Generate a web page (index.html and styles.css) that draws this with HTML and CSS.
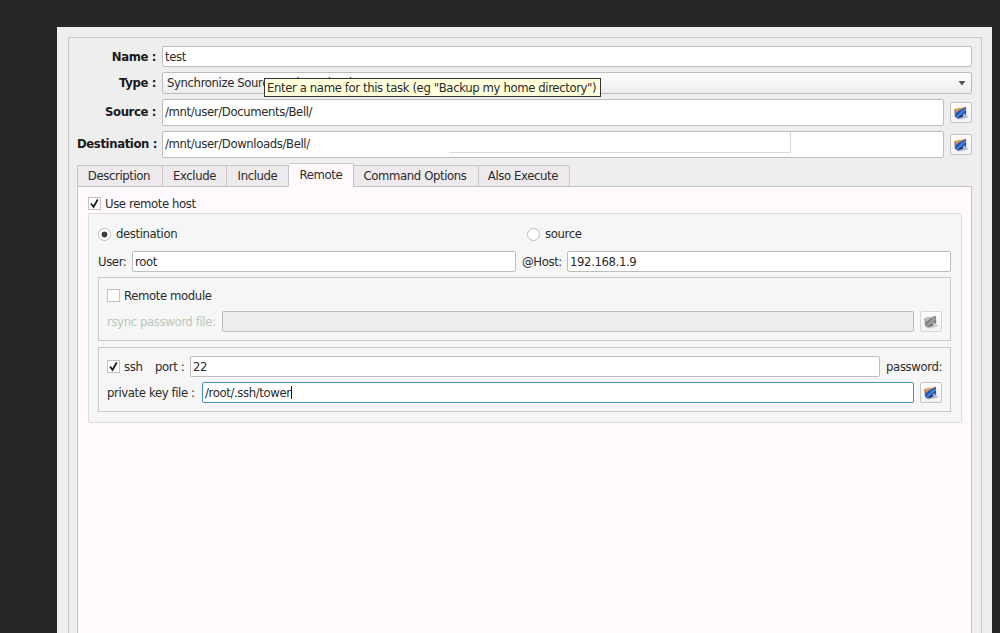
FILE: index.html
```html
<!DOCTYPE html>
<html lang="en">

<head>
  <meta charset="UTF-8">
  <meta name="viewport" content="width=device-width, initial-scale=1.0">
  <title>Task Settings</title>

  <link rel="stylesheet" href="styles.css">
</head>

<body>
  <!-- Folder icon shared by all the browse buttons -->
  <svg class="defs" width="0" height="0">
    <symbol id="folder" viewBox="0 0 16 16">
      <path d="M4 13 L14.5 10.5 L14.8 12.6 L6 14.5 Z" fill="#8a8da0" opacity="0.6" />
      <path d="M1.3 4.5 L5 2.8 L7.5 3 L12.8 1.5 L12 4 L3 9 Z" fill="#e0a050" />
      <path d="M1.3 4.5 L3 4.5 L3.5 12.5 L1.8 11 Z" fill="#a8745c" />
      <path d="M2.2 8.5 L6.5 5 L13 2 L13.2 10 L4.2 13.5 L2 11.5 Z" fill="#2855b8" />
      <path d="M3 11.5 L10.5 4.5 L13 3.2 L12.8 5 L4.8 12.5 Z" fill="#4288d8" />
      <path d="M4.5 13.6 L8 10 L10.5 11.4 Z" fill="#232c70" />
      <path d="M9.5 9.8 L12 8.8 L12.3 10 L10 10.8 Z" fill="#c3cdec" />
    </symbol>
  </svg>

  <div class="window">
    <div class="frame">
      <div class="row row-name">
        <label class="title">Name :</label>
        <div class="field">test</div>
      </div>
      <div class="row row-type">
        <label class="title">Type :</label>
        <div class="field select">
          <span>Synchronize Source and Destination</span>
          <svg class="arrow" width="8" height="5"><path d="M0.5 0 H7.5 L4 4.5 Z" fill="#555" /></svg>
        </div>
        <div class="tooltip">Enter a name for this task (eg "Backup my home directory")</div>
      </div>
      <div class="row row-path">
        <label class="title">Source :</label>
        <div class="field">/mnt/user/Documents/Bell/</div>
        <button class="browse"><svg width="16" height="16"><use href="#folder" /></svg></button>
      </div>
      <div class="row row-path">
        <label class="title">Destination :</label>
        <div class="field">/mnt/user/Downloads/Bell/<span class="outline"></span></div>
        <button class="browse"><svg width="16" height="16"><use href="#folder" /></svg></button>
      </div>

      <div class="tabs">
        <div class="tab tab-description">Description</div>
        <div class="tab tab-exclude">Exclude</div>
        <div class="tab tab-include">Include</div>
        <div class="tab tab-remote active">Remote</div>
        <div class="tab tab-command">Command Options</div>
        <div class="tab tab-execute">Also Execute</div>
      </div>

      <div class="pane">
        <div class="check-row">
          <span class="checkbox"><svg width="11" height="11"><path d="M2 5.5 L4.5 8.8 L8.8 1.5" /></svg></span>
          <span>Use remote host</span>
        </div>

        <div class="group">
          <div class="radios">
            <div class="radio-row"><span class="radio checked"></span>destination</div>
            <div class="radio-row"><span class="radio"></span>source</div>
          </div>
          <div class="host-row">
            <label class="user">User:</label>
            <div class="field">root</div>
            <label class="host">@Host:</label>
            <div class="field">192.168.1.9</div>
          </div>

          <div class="box module">
            <div class="check-row">
              <span class="checkbox"></span>
              <span>Remote module</span>
            </div>
            <div class="file-row">
              <label class="rsync">rsync password file:</label>
              <div class="field disabled"></div>
              <button class="browse off"><svg width="16" height="16"><use href="#folder" /></svg></button>
            </div>
          </div>

          <div class="box ssh">
            <div class="port-row">
              <span class="checkbox"><svg width="11" height="11"><path d="M2 5.5 L4.5 8.8 L8.8 1.5" /></svg></span>
              <span class="ssh-label">ssh</span>
              <label class="port">port :</label>
              <div class="field">22</div>
              <label class="password">password:</label>
            </div>
            <div class="file-row">
              <label class="key">private key file :</label>
              <div class="field focused">/root/.ssh/tower<span class="caret"></span></div>
              <button class="browse"><svg width="16" height="16"><use href="#folder" /></svg></button>
            </div>
          </div>
        </div>
      </div>
    </div>
  </div>
</body>

</html>
```
FILE: styles.css
```css
* {
  box-sizing: border-box;
}

body {
  margin: 0;
  height: 633px;
  overflow: hidden;
  padding: 27px 8px 0 57px;
  background-color: #272727;
  color: #2b2b2b;
  font-family: "DejaVu Sans", sans-serif;
  font-size: 11.7px;
  letter-spacing: -0.39px;
  line-height: 14px;
  white-space: nowrap;
}

.defs {
  position: absolute;
}

.window {
  height: 620px;
  padding: 10px 10px 0 11px;
  background-color: #eeeeee;
}

.frame {
  height: 620px;
  padding: 8px 9px 0 8px;
  border: 1px solid #c6c6c6;
}

/* Form rows */
.row {
  position: relative;
  display: flex;
  align-items: center;
}

.row-name {
  height: 21px;
  margin-bottom: 5px;
}

.row-type {
  height: 22px;
  margin-bottom: 5px;
}

.row-path {
  height: 27px;
  margin-bottom: 5px;
}

.row-path .title,
.row-path .field {
  padding-bottom: 1px;
}

.title {
  width: 85px;
  flex: none;
  padding-right: 6px;
  text-align: right;
  font-weight: bold;
  color: #1a1a1a;
}

.field {
  position: relative;
  flex: 1;
  height: 21px;
  display: flex;
  align-items: center;
  padding-left: 2px;
  background-color: #fff;
  border: 1px solid #bdbdbd;
  border-radius: 2px;
}

.row-path .field {
  height: 27px;
}

.select {
  height: 22px;
  justify-content: space-between;
  padding: 0 5px 0 4px;
  background: linear-gradient(#fdfcfd, #f5f3f5 60%, #ebebed);
}

.tooltip {
  position: absolute;
  left: 187px;
  top: 6px;
  width: 337px;
  height: 19px;
  padding: 2px 0 0 2px;
  background-color: #ffffdc;
  border: 1px solid #333;
  z-index: 2;
}

.outline {
  position: absolute;
  left: 286px;
  top: 0;
  width: 342px;
  height: 21px;
  border-right: 1px solid #d9d9d9;
  border-bottom: 1px solid #d9d9d9;
}

.browse {
  width: 22px;
  height: 21px;
  flex: none;
  margin-left: 6px;
  padding: 0 1px 0 0;
  display: flex;
  align-items: center;
  justify-content: center;
  background: linear-gradient(#fdfdfd, #f3f3f3);
  border: 1px solid #c4c4c4;
  border-radius: 2px;
}

.off {
  border-color: #d6d6d6;
}

.off svg {
  filter: grayscale(1);
  opacity: 0.7;
}

/* Tabs */
.tabs {
  display: flex;
  align-items: flex-end;
  height: 24px;
}

.tab {
  height: 22px;
  padding-top: 3px;
  text-align: center;
  background-color: #eee9ed;
  border: 1px solid #c3c6c3;
  border-left: 0;
}

.tab-description {
  width: 86px;
  padding-right: 2px;
  border-left: 1px solid #c3c6c3;
  border-radius: 2px 0 0 0;
}

.tab-exclude {
  width: 64px;
}

.tab-include {
  width: 62px;
}

.tab-remote {
  width: 65px;
}

.tab-command {
  width: 125px;
  padding-right: 2px;
}

.tab-execute {
  width: 91px;
  padding-right: 2px;
  border-radius: 0 2px 0 0;
}

.active {
  position: relative;
  z-index: 1;
  height: 24px;
  padding-top: 4px;
  background-color: #fff9fe;
  border-bottom: 0;
  border-radius: 2px 2px 0 0;
}

.pane {
  height: 470px;
  margin-top: -1px;
  padding: 10px 9px 0 10px;
  background-color: #fff9fe;
  border: 1px solid #c3c3c3;
}

.check-row {
  display: flex;
  align-items: center;
  gap: 4px;
  height: 13px;
}

.checkbox {
  width: 13px;
  height: 13px;
  flex: none;
  background-color: #fff;
  border: 1px solid #c2c2c2;
}

.checkbox svg {
  display: block;
}

.checkbox path {
  fill: none;
  stroke: #1c1c1c;
  stroke-width: 1.8;
}

.group {
  height: 210px;
  margin-top: 3px;
  padding: 13px 10px 0 9px;
  background-color: #f6f6f6;
  border: 1px solid #dcdcdc;
  border-radius: 2px;
}

.radios {
  display: grid;
  grid-template-columns: 429px 1fr;
  height: 14px;
}

.radio-row {
  display: flex;
  align-items: center;
  gap: 5px;
}

.radio {
  width: 13px;
  height: 13px;
  background-color: #fff;
  border: 1px solid #b3c4b3;
  border-radius: 50%;
}

.checked {
  background: radial-gradient(circle, #3c3c3c 2.7px, #fff 3.3px);
}

.host-row {
  display: flex;
  align-items: center;
  margin-top: 10px;
}

.user {
  width: 34px;
}

.host {
  width: 51px;
  padding-left: 6px;
}

/* Framed groups inside the remote host settings */
.box {
  padding: 11px 8px 0 8px;
  border: 1px solid #c9c9c9;
}

.module {
  height: 64px;
  margin-top: 5px;
}

.ssh {
  height: 65px;
  margin-top: 6px;
  padding-top: 8px;
}

.file-row,
.port-row {
  display: flex;
  align-items: center;
}

.module .file-row {
  margin-top: 9px;
}

.ssh .file-row {
  margin-top: 5px;
}

.rsync {
  width: 115px;
  color: #b9c9b9;
}

.disabled {
  background-color: #ededed;
}

.ssh-label {
  width: 31px;
  margin-left: 4px;
}

.port {
  width: 35px;
}

.password {
  padding-left: 6px;
}

.key {
  width: 95px;
}

.focused {
  border-color: #3f97c0;
}

.caret {
  width: 1px;
  height: 13px;
  background-color: #111;
}
```
